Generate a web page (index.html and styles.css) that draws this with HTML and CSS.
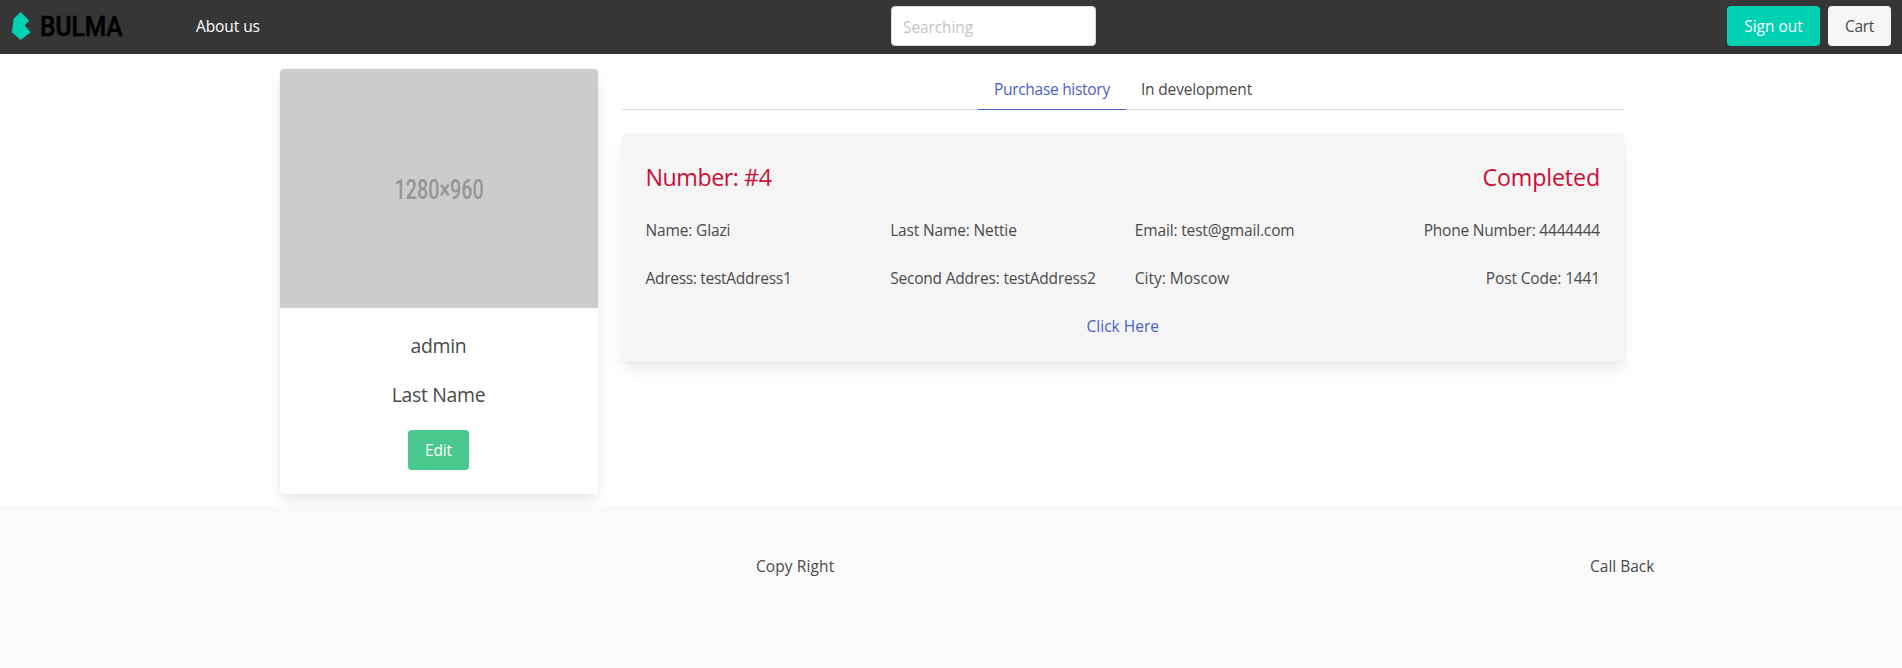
FILE: index.html
```html
<!DOCTYPE html>
<html lang="en">
<head>
<meta charset="utf-8">
<title>Profile</title>
<link rel="stylesheet" href="styles.css">
</head>
<body>
<nav class="navbar">
  <a class="logo">
    <svg width="112" height="28" viewBox="0 0 112 28">
      <path fill="#00d1b2" d="M0 20.2 1.5 7 8.5 0.1 17.2 8.6 12.8 13.5 18.8 20.2 8.5 28Z"/>
      <text class="wordmark" x="28" y="23.9" textLength="82.5" lengthAdjust="spacingAndGlyphs">BULMA</text>
    </svg>
  </a>
  <a class="about">About us</a>
  <input class="search" type="text" placeholder="Searching">
  <div class="buttons">
    <a class="button primary">Sign out</a>
    <a class="button light tight">Cart</a>
  </div>
</nav>
<main class="container">
  <aside class="card">
    <svg class="photo" viewBox="0 0 318 239">
      <text class="dimensions" x="114.6" y="129.8" textLength="89" lengthAdjust="spacingAndGlyphs">1280×960</text>
    </svg>
    <div class="card-content">
      <p class="name">admin</p>
      <p class="name">Last Name</p>
      <a class="button success snug">Edit</a>
    </div>
  </aside>
  <section class="orders">
    <div class="tabs">
      <a class="tab active tight">Purchase history</a>
      <a class="tab snug">In development</a>
    </div>
    <article class="box">
      <header class="order-head">
        <span class="number">Number: #4</span>
        <span class="snug">Completed</span>
      </header>
      <div class="fields">
        <span class="snug">Name: Glazi</span>
        <span class="snug">Last Name: Nettie</span>
        <span class="snug">Email: test@gmail.com</span>
        <span class="end close">Phone Number: 4444444</span>
      </div>
      <div class="fields">
        <span class="tight">Adress: testAddress1</span>
        <span class="close">Second Addres: testAddress2</span>
        <span>City: Moscow</span>
        <span class="end snug">Post Code: 1441</span>
      </div>
      <a class="details">Click Here</a>
    </article>
  </section>
</main>
<footer class="footer">
  <p class="loose">Copy Right</p>
  <p>Call Back</p>
</footer>
</body>
</html>
```
FILE: styles.css
```css
* { box-sizing: border-box; }
html, body { margin: 0; height: 100%; }
body {
  display: flex;
  flex-direction: column;
  min-height: 668px;
  overflow: hidden;
  background: #fff;
  color: #4a4a4a;
  font: 15.5px/24px "Open Sans", "Noto Sans", sans-serif;
}
p { margin: 0; }

.snug { letter-spacing: -0.15px; }
.close { letter-spacing: -0.2px; }
.tight { letter-spacing: -0.29px; }
.loose { letter-spacing: 0.1px; }

.navbar {
  display: grid;
  grid-template-columns: 184px 695px 205px 1fr;
  align-items: center;
  height: 54px;
  flex: none;
  padding: 0 11px 2px 12px;
  background: #363636;
}
.logo { display: flex; }
.logo svg { overflow: visible; }
.wordmark {
  font: 500 28px Roboto, sans-serif;
  fill: #000;
  stroke: #000;
  stroke-width: 0.7;
  stroke-linejoin: round;
}
.about { color: #fff; letter-spacing: -0.08px; }
.search {
  width: 205px;
  height: 40px;
  padding: 2px 11px 0;
  border: 1px solid #dbdbdb;
  border-radius: 4px;
  background: #fff;
  font: inherit;
  letter-spacing: -0.1px;
}
.search::placeholder { color: #c4c4c4; opacity: 1; }
.buttons { display: flex; justify-content: flex-end; gap: 8px; }
.button {
  display: inline-flex;
  align-items: center;
  justify-content: center;
  height: 40px;
  border-radius: 4px;
  color: #fff;
}
.primary { width: 93px; background: #00d1b2; }
.light { width: 63px; background: #f5f5f5; color: #4a4a4a; }
.success { width: 61px; margin-top: 1px; background: #48c78e; }

.container {
  display: grid;
  grid-template-columns: 318px 1002px;
  gap: 24px;
  align-items: start;
  width: 1344px;
  margin: 0 auto;
  padding-top: 15px;
  height: 452px;
  flex: none;
}
.card, .box {
  position: relative;
  border-radius: 4px;
  box-shadow: 0 8px 16px -2px rgba(10, 10, 10, 0.1), 0 0 0 1px rgba(10, 10, 10, 0.02);
}
.card { margin-left: 1px; width: 318px; background: #fff; }
.photo {
  display: block;
  width: 318px;
  height: 239px;
  border-radius: 4px 4px 0 0;
  background: #ccc;
}
.dimensions { font: 500 27.5px Roboto, sans-serif; fill: #969696; }
.card-content {
  display: flex;
  flex-direction: column;
  align-items: center;
  height: 186px;
  padding: 23px 1px 0 0;
}
.name {
  margin-bottom: 19px;
  font-size: 19.4px;
  line-height: 30px;
  letter-spacing: -0.32px;
}

.orders { padding-left: 1px; width: 1003px; }
.tabs {
  display: flex;
  justify-content: center;
  height: 41px;
  margin-bottom: 24px;
  border-bottom: 1px solid #dbdbdb;
}
.tab { height: 41px; padding: 8px 16px; }
.tab + .tab { padding-left: 15px; }
.active { border-bottom: 1px solid #485fc7; color: #485fc7; }
.box { padding: 24px 24px 24px 23.5px; height: 228px; background: #f5f5f5; }
.order-head {
  display: flex;
  justify-content: space-between;
  padding-top: 1px;
  margin-bottom: 23px;
  color: #cc0f35;
  font-size: 23.25px;
  line-height: 36px;
}
.number { letter-spacing: -0.45px; }
.fields {
  display: grid;
  grid-template-columns: repeat(4, 1fr);
  gap: 24px;
  margin-bottom: 24px;
}
.fields span { white-space: nowrap; }
.end { text-align: right; }
.details { display: block; text-align: center; color: #485fc7; }

.footer {
  display: grid;
  grid-template-columns: 834px 1fr;
  align-content: start;
  flex: 1;
  padding: 48px 0 0 756px;
  background: #fafafa;
}
```
